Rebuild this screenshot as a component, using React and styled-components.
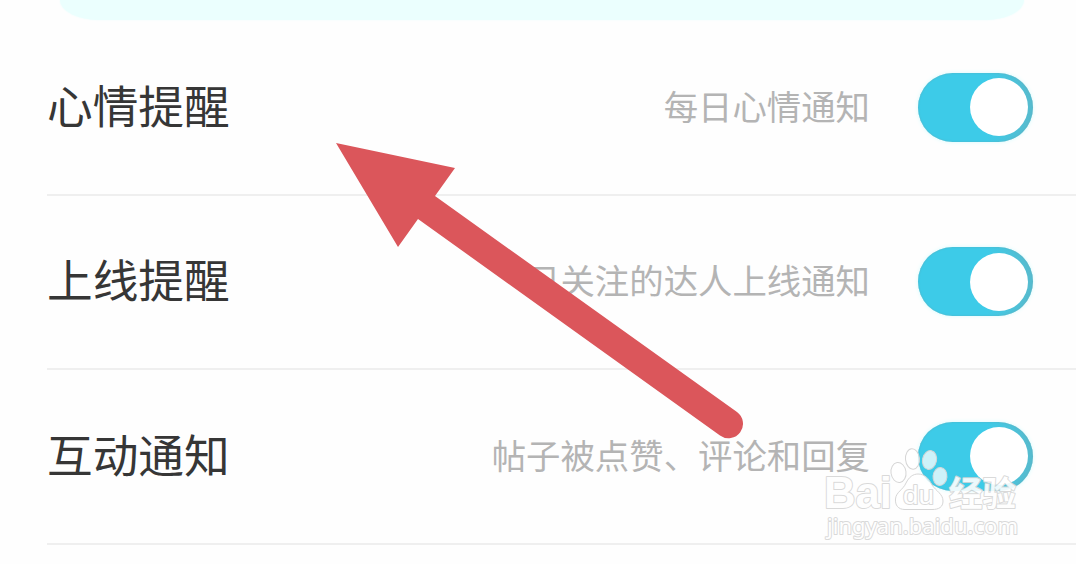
import { useState } from "react";
import styled, { createGlobalStyle } from "styled-components";

const GlobalStyle = createGlobalStyle`
  body {
    margin: 0;
    background-color: #fefefe;
    overflow: hidden;
  }
`;

const StPage = styled.main`
  position: relative;
  width: 1076px;
  height: 564px;
  overflow: hidden;
  background-color: #fefefe;
  font-family: "Noto Sans CJK SC", sans-serif;
`;
const StBanner = styled.div`
  height: 20px;
  margin: 0 52px 0 60px;
  background-color: #ebfffe;
  border-radius: 0 0 48px 48px / 0 0 24px 24px;
  box-shadow: 0 0 2px #ebfffe;
`;
const StList = styled.ul`
  list-style: none;
  margin: 0;
  padding: 1px 0 0 47px;
`;
const StItem = styled.li`
  box-sizing: border-box;
  display: flex;
  align-items: center;
  height: 174.5px;
  padding-right: 43px;
  border-bottom: 2px solid #efefef;
`;
const StLabel = styled.span`
  flex: 1;
  padding-bottom: 7px;
  font-size: 45.7px;
  line-height: 60px;
  font-weight: 400;
  color: #363636;
`;
const StDesc = styled.span`
  padding-bottom: 5px;
  margin-right: 48px;
  font-size: 34.4px;
  line-height: 48px;
  font-weight: 400;
  color: #b4b4b4;
  white-space: nowrap;
`;
const StToggle = styled.button`
  display: flex;
  align-items: center;
  justify-content: ${({ $on }) => ($on ? "flex-end" : "flex-start")};
  width: 115px;
  height: 69px;
  padding: 0 5px;
  border: none;
  border-radius: 35px;
  background: ${({ $on }) =>
    $on ? "linear-gradient(90deg, #3dcbe8 60%, #55bcd0 95%)" : "#dddddd"};
  box-shadow: inset 0 0 2px #5aaebd, 0 0 4px #d5fbff;
  cursor: pointer;
`;
const StKnob = styled.span`
  width: 58px;
  height: 58px;
  border-radius: 50%;
  background-color: #ffffff;
`;
const StOverlay = styled.svg`
  position: absolute;
  top: 0;
  left: 0;
  pointer-events: none;
`;
const StMark = styled.text`
  font-family: ${({ $font }) => $font}, "Noto Sans CJK SC", sans-serif;
  font-size: ${({ $size }) => $size}px;
  font-weight: ${({ $weight }) => $weight || 700};
  paint-order: stroke;
`;

const items = [
  { label: "心情提醒", desc: "每日心情通知" },
  { label: "上线提醒", desc: "已关注的达人上线通知" },
  { label: "互动通知", desc: "帖子被点赞、评论和回复" },
];

function Arrow() {
  return (
    <path
      fill="#db565b"
      d="M336 143 L455 168 L435 196 L737 412 A14 14 0 0 1 720 435.500 L418 219 L398 247 Z"
    />
  );
}

function Watermark() {
  return (
    <g fill="#ffffff" stroke="#d6d6d6" strokeLinejoin="round">
      <g fillOpacity="0.75" strokeWidth="1">
        <ellipse cx="898.5" cy="472.5" rx="7.5" ry="10" transform="rotate(-8 898.5 472.5)" />
        <ellipse cx="912.5" cy="459" rx="7" ry="10.3" transform="rotate(-5 912.5 459)" />
        <ellipse cx="929.5" cy="460" rx="7" ry="9.5" transform="rotate(12 929.5 460)" />
        <ellipse cx="940" cy="476.5" rx="7" ry="9" transform="rotate(5 940 476.5)" />
        <path d="M918 474 C925 474 929 479 932 485 C936 491 943 494 943 501 C943 507 939 509.5 932 509.5 L905 509.5 C898 509.5 895 505 895.5 499 C896 492 903 490 906 483 C909 477 913 474 918 474 Z" />
      </g>
      <g opacity="0.9" strokeWidth="2">
        <StMark $font="Liberation Sans" $size="44" x="824" y="508" textLength="68" lengthAdjust="spacingAndGlyphs">
          Bai
        </StMark>
        <StMark $font="Liberation Sans" $size="26" $weight="400" x="903" y="503.5" textLength="31" lengthAdjust="spacingAndGlyphs">
          du
        </StMark>
        <StMark $font="Noto Sans CJK SC" $size="34" $weight="700" x="949" y="506" textLength="67" lengthAdjust="spacingAndGlyphs">
          经验
        </StMark>
        <StMark $font="Noto Sans" $size="22" $weight="400" x="827" y="534" textLength="191" lengthAdjust="spacingAndGlyphs">
          jingyan.baidu.com
        </StMark>
      </g>
    </g>
  );
}

function NoticeItem({ label, desc }) {
  const [on, setOn] = useState(true);

  const handleToggle = () => {
    setOn(!on);
  };

  return (
    <StItem>
      <StLabel>{label}</StLabel>
      <StDesc>{desc}</StDesc>
      <StToggle $on={on} role="switch" aria-checked={on} onClick={handleToggle}>
        <StKnob />
      </StToggle>
    </StItem>
  );
}

export default function App() {
  return (
    <StPage>
      <GlobalStyle />
      <StBanner />
      <StList>
        {items.map((item) => (
          <NoticeItem key={item.label} label={item.label} desc={item.desc} />
        ))}
      </StList>
      <StOverlay width="1076" height="564" viewBox="0 0 1076 564">
        <Arrow />
        <Watermark />
      </StOverlay>
    </StPage>
  );
}
